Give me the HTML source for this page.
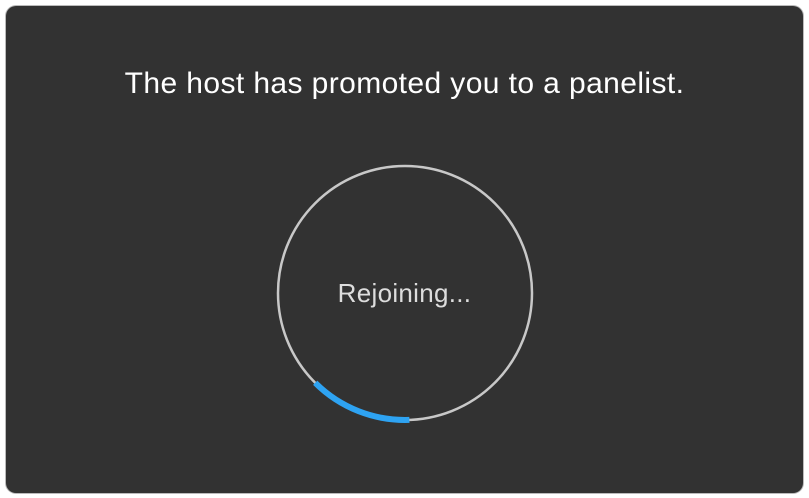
<!DOCTYPE html>
<html><head><style>
html,body{margin:0;padding:0;background:#fff;width:809px;height:498px;overflow:hidden}
.p{position:absolute;left:6px;top:6px;width:797px;height:487px;background:#323232;border-radius:10px;box-shadow:0 0 0 1px #bbb}
.t{position:absolute;left:0;width:809px;top:67px;text-align:center;color:#fff;font:30px "Liberation Sans",sans-serif;letter-spacing:0.4px}
.r{position:absolute;left:0;width:809px;top:278px;text-align:center;color:#ddd;font:26px "Liberation Sans",sans-serif;letter-spacing:0.3px}
svg{position:absolute;left:0;top:0}
</style></head><body>
<div class="p"></div>
<svg width="809" height="498">
<circle cx="405" cy="293" r="127" fill="none" stroke="#c8c8c8" stroke-width="2.5"/>
<path d="M315.2 382.8 A127 127 0 0 0 409.4 419.9" fill="none" stroke="#2ea3f2" stroke-width="6"/>
</svg>
<div class="t">The host has promoted you to a panelist.</div>
<div class="r">Rejoining...</div>
</body></html>
